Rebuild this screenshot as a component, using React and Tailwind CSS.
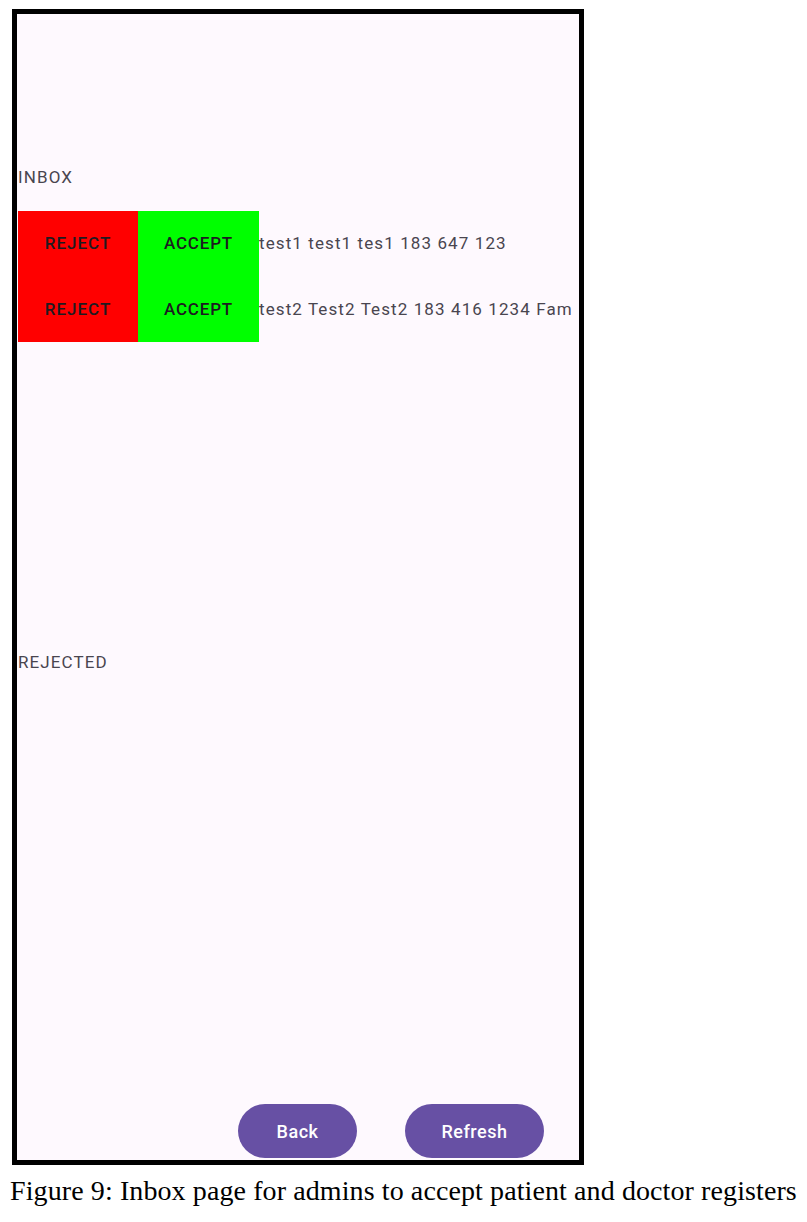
const FONT = { fontFamily: 'Roboto, "Noto Sans", sans-serif' }

const requests = [
  { id: 1, text: 'test1 test1 tes1 183 647 123' },
  { id: 2, text: 'test2 Test2 Test2 183 416 1234 Fam' },
]

function RequestRow({ text }) {
  return (
    <div className="flex items-center h-[65.5px]">
      <button className="w-[120px] h-full bg-[#ff0000] text-[#1d1b20] text-[17px] font-medium tracking-[1px]">
        REJECT
      </button>
      <button className="w-[121px] h-full bg-[#00ff00] text-[#1d1b20] text-[17px] font-medium tracking-[0.8px]">
        ACCEPT
      </button>
      <span className="text-[17px] tracking-[1.1px] text-[#49454f] whitespace-nowrap">{text}</span>
    </div>
  )
}

export default function App() {
  return (
    <div className="bg-white w-[807px] h-[1222px] pt-[9px]" style={FONT}>
      <div className="ml-[12px] w-[572px] h-[1156px] border-[5px] border-black bg-[#fef9fe] flex flex-col pl-px">
        <p className="mt-[153px] h-[20px] leading-[20px] text-[17px] tracking-[1.1px] text-[#49454f]">INBOX</p>
        <div className="mt-[24px] overflow-hidden">
          {requests.map((r) => (
            <RequestRow key={r.id} text={r.text} />
          ))}
        </div>
        <p className="mt-[310px] h-[20px] leading-[20px] text-[17px] tracking-[1.1px] text-[#49454f]">REJECTED</p>

        <div className="mt-auto flex items-end pb-[2px]">
          <button className="ml-[220px] w-[119px] h-[54px] rounded-full bg-[#6750a4] text-white text-[18px] font-medium tracking-[0.5px]">
            Back
          </button>
          <button className="ml-[48px] w-[139px] h-[54px] rounded-full bg-[#6750a4] text-white text-[18px] font-medium tracking-[0.5px]">
            Refresh
          </button>
        </div>
      </div>
      <p
        className="mt-[10px] pl-[10px] text-[28px] leading-[32px] tracking-[0.1px] text-black whitespace-nowrap"
        style={{ fontFamily: '"Liberation Serif", serif' }}
      >
        Figure 9: Inbox page for admins to accept patient and doctor registers
      </p>
    </div>
  )
}
